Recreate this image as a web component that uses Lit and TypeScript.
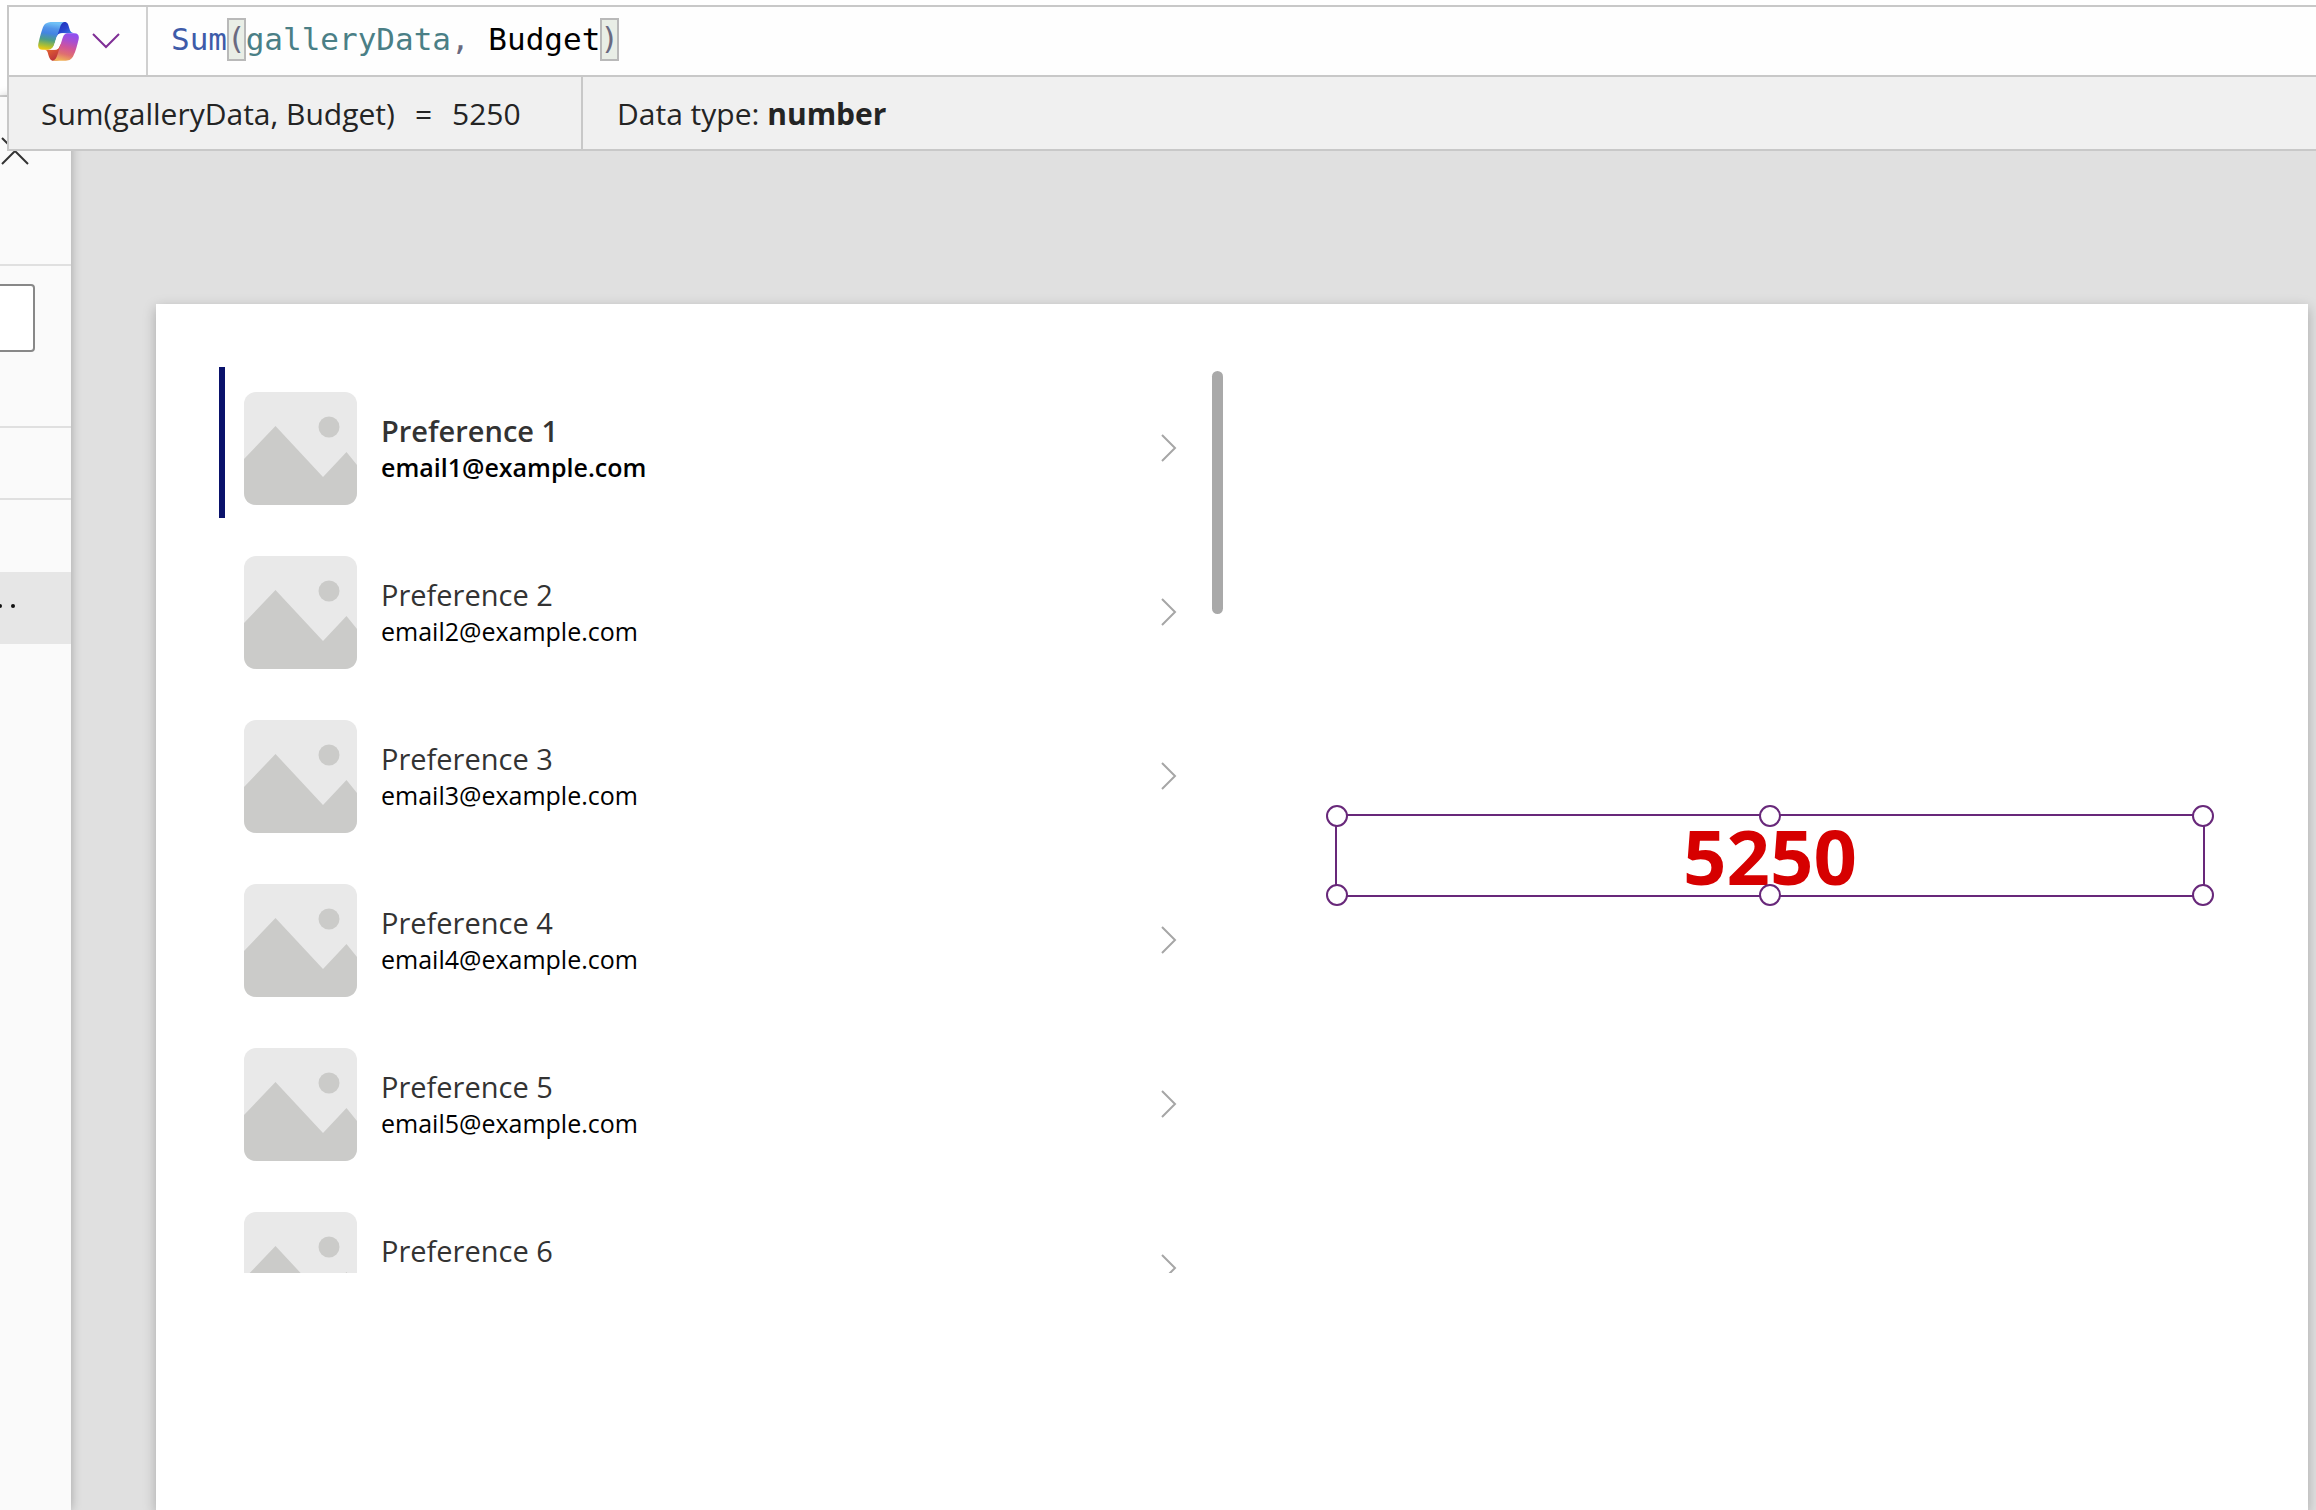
import { LitElement, html, css, svg } from "lit";
import { customElement, property, state } from "lit/decorators.js";
import { classMap } from "lit/directives/class-map.js";

interface Preference {
  title: string;
  email?: string;
}

@customElement("copilot-logo")
class CopilotLogo extends LitElement {
  static styles = css`
    :host { display: block; }
    svg { display: block; width: 41px; height: 39px; }
  `;

  render() {
    return html`<svg viewBox="0 0 124 118" aria-hidden="true">
      <defs>
        <linearGradient id="fold" x1="0" y1="0" x2="1" y2="1">
          <stop offset="0" stop-color="#1d2bb4" />
          <stop offset="0.5" stop-color="#2746cf" />
          <stop offset="1" stop-color="#4aa3f5" />
        </linearGradient>
        <linearGradient id="left" x1="0.3" y1="0" x2="0.15" y2="1">
          <stop offset="0" stop-color="#6fc0f6" />
          <stop offset="0.2" stop-color="#5294e8" />
          <stop offset="0.38" stop-color="#4384e2" />
          <stop offset="0.62" stop-color="#4d9f86" />
          <stop offset="0.82" stop-color="#a3bd3a" />
          <stop offset="1" stop-color="#fbcb0c" />
        </linearGradient>
        <linearGradient id="base" x1="0" y1="0" x2="0.6" y2="1">
          <stop offset="0" stop-color="#f08a3c" />
          <stop offset="0.5" stop-color="#dc5a33" />
          <stop offset="1" stop-color="#b92f3c" />
        </linearGradient>
        <linearGradient id="right" x1="0.6" y1="0" x2="0.35" y2="1">
          <stop offset="0" stop-color="#8f4ff0" />
          <stop offset="0.25" stop-color="#a94fd0" />
          <stop offset="0.5" stop-color="#d0559a" />
          <stop offset="0.75" stop-color="#df6f70" />
          <stop offset="1" stop-color="#f0b357" />
        </linearGradient>
      </defs>
      <path fill="url(#fold)" d="M64 0H80C90 0 92 8 95 20C97 30 102 34 110 34H78C66 34 62 36 58 46L52 40Z" />
      <path fill="url(#base)" d="M16 84H50C58 84 62 80 64 74L74 60L62 116L46 117C38 117 34 108 31 98C29 88 26 84 16 84Z" />
      <path fill="url(#left)" d="M44 0H82C73 0 69 8 66 18L50 66C46 78 42 84 30 84H14C2 84-1 76 1 66C6 44 10 30 15 16C20 4 28 0 44 0Z" />
      <path fill="#fefefe" d="M86 34C78 34 76 40 73 50L64 76C62 82 58 84 50 84H33C43 83 47 76 50 66L56 46C59 38 62 34 72 34Z" />
      <path fill="url(#right)" d="M92 34H110C122 34 125 42 123 52C118 72 114 88 108 100C103 112 96 117 84 117H44C52 116 56 108 59 98L74 50C78 38 82 34 92 34Z" />
    </svg>`;
  }
}

@customElement("formula-bar")
class FormulaBar extends LitElement {
  static styles = css`
    :host { display: block; padding: 5px 0 0 7px; color: #242424; }
    .frame { border: 2px solid #c8c8c8; border-right: 0; background: #fefefe; }
    .entry { display: flex; height: 68px; border-bottom: 2px solid #c8c8c8; }
    .copilot {
      display: flex; align-items: center; gap: 13px;
      width: 139px; padding: 0 0 0 29px;
      border: 0; border-right: 2px solid #d0d0d0; background: none;
      box-sizing: border-box;
    }
    .caret { display: block; width: 28px; height: 16px; fill: none; stroke: #7f2f96; stroke-width: 2; }
    .formula {
      flex: 1; display: flex; align-items: center; padding: 0 0 4px 23px;
      font: 31px "DejaVu Sans Mono", monospace; white-space: pre; outline: none;
    }
    .fn { color: #3e5ba9; }
    .name { color: #4a7f86; }
    .punct { color: #6a6a80; }
    .field { color: #000; }
    .bracket {
      color: #6a6a80; background: #e9eee6; outline: 2px solid #b9b9b9; outline-offset: -2px;
      height: 43px; line-height: 41px;
    }
    .result { display: flex; height: 72px; background: #f0f0f0; font: 30px "Open Sans", sans-serif; }
    .cell { display: flex; align-items: center; white-space: pre; }
    .value { width: 574px; padding-left: 32px; gap: 20px; box-sizing: border-box; border-right: 2px solid #c8c8c8; }
    .type { padding-left: 34px; }
    strong { font-weight: 700; }
  `;

  render() {
    return html`<div class="frame">
      <div class="entry">
        <button class="copilot" aria-label="Copilot">
          <copilot-logo></copilot-logo>
          <svg class="caret" viewBox="0 0 28 16" aria-hidden="true"><path d="M1 1L14 14L27 1" /></svg>
        </button>
        <div class="formula" role="textbox" aria-label="Formula" contenteditable="true" spellcheck="false"><span class="fn">Sum</span><span class="bracket">(</span><span class="name">galleryData</span><span class="punct">, </span><span class="field">Budget</span><span class="bracket">)</span></div>
      </div>
      <div class="result">
        <div class="cell value"><span>Sum(galleryData, Budget)</span><span>=</span><span>5250</span></div>
        <div class="cell type"><span>Data type: <strong>number</strong></span></div>
      </div>
    </div>`;
  }
}

@customElement("tree-pane")
class TreePane extends LitElement {
  static styles = css`
    :host {
      display: block; width: 71px; flex: none; overflow: hidden;
      background: #fafafa; position: relative;
    }
    .head { height: 167px; padding: 40px 0 0 1px; box-sizing: border-box; }
    .close { display: block; padding: 0; border: 0; background: none; }
    .close svg { display: block; width: 28px; height: 28px; stroke: #333; stroke-width: 2; fill: none; }
    .find { border: solid #e0e0e0; border-width: 2px 0; padding: 18px 0 74px; }
    .search {
      display: block; width: 47px; height: 68px; margin-left: -12px; padding: 0 8px;
      box-sizing: border-box; border: 2px solid #888; border-radius: 4px; background: #fff;
    }
    .item { height: 70px; border-bottom: 2px solid #e0e0e0; }
    .item.plain { height: 72px; border: 0; }
    .item.active { height: 72px; border: 0; background: #e6e6e6; display: flex; align-items: center; }
    .more { display: block; padding: 0; border: 0; background: none; }
    .more svg { display: block; width: 20px; height: 6px; margin-top: -4px; fill: #111; }
  `;

  render() {
    return html`
      <div class="head">
        <button class="close" aria-label="Close">
          <svg viewBox="0 0 28 28" aria-hidden="true"><path d="M1 1L27 27M27 1L1 27" /></svg>
        </button>
      </div>
      <div class="find"><input class="search" type="search" aria-label="Search" /></div>
      <div class="item"></div>
      <div class="item plain"></div>
      <div class="item active">
        <button class="more" aria-label="More actions">
          <svg viewBox="0 0 20 6" aria-hidden="true"><circle cx="0" cy="3" r="2" /><circle cx="13" cy="3" r="2" /></svg>
        </button>
      </div>`;
  }
}

@customElement("preference-gallery")
class PreferenceGallery extends LitElement {
  @property({ attribute: false }) items: Preference[] = [];
  @state() private selected = 0;

  static styles = css`
    :host { display: flex; justify-content: space-between; height: 906px; overflow: hidden; }
    .list { flex: 1; margin: 0; padding: 0 35px 0 0; list-style: none; }
    .row {
      display: flex; align-items: center; height: 151px; margin-bottom: 13px;
      padding: 11px 0 0 19px; box-sizing: border-box; border-left: 6px solid transparent;
    }
    .row.selected { border-left-color: #0a126b; }
    .thumb { display: block; width: 113px; height: 113px; flex: none; }
    .text { flex: 1; margin-left: 24px; font-family: "Open Sans", sans-serif; }
    .title { font-size: 29px; line-height: 37px; color: #333; }
    .email { font-size: 25px; line-height: 36px; min-height: 36px; color: #000; }
    .selected .title, .selected .email { font-weight: 600; }
    .next { display: block; padding: 0; border: 0; background: none; }
    .next svg { display: block; width: 16px; height: 28px; fill: none; stroke: #a6a6a6; stroke-width: 2; }
    .thumb-bar { width: 11px; height: 243px; margin-top: 4px; border-radius: 6px; background: #a9a9a9; }
  `;

  private picture() {
    return svg`
      <rect width="113" height="113" rx="12" fill="#e9e9e9" />
      <circle cx="85" cy="35" r="10.5" fill="#cbcbc9" />
      <path fill="#cbcbc9" d="M0 67L31.500 34L79 85L102.500 60L113 73V101C113 108 108 113 101 113H12C5 113 0 108 0 101Z" />`;
  }

  render() {
    return html`
      <ul class="list">
        ${this.items.map(
          (item, i) => html`<li class=${classMap({ row: true, selected: i === this.selected })}>
            <svg class="thumb" viewBox="0 0 113 113" aria-hidden="true">${this.picture()}</svg>
            <div class="text">
              <div class="title">${item.title}</div>
              <div class="email">${item.email}</div>
            </div>
            <button class="next" aria-label="Open ${item.title}" @click=${() => (this.selected = i)}>
              <svg viewBox="0 0 16 28" aria-hidden="true"><path d="M1 1L14 14L1 27" /></svg>
            </button>
          </li>`
        )}
      </ul>
      <div class="thumb-bar"></div>`;
  }
}

@customElement("selected-label")
class SelectedLabel extends LitElement {
  static styles = css`
    :host { display: block; }
    .box {
      position: relative; display: flex; align-items: center; justify-content: center;
      height: 83px; box-sizing: border-box; border: 2px solid #68287a;
      font: 700 76px/80px "Open Sans", sans-serif; color: #d60000;
    }
    .handle {
      position: absolute; width: 22px; height: 22px; box-sizing: border-box;
      border: 2px solid #68287a; border-radius: 50%; background: #fff;
    }
    .top { top: -11px; }
    .bottom { bottom: -11px; }
    .left { left: -11px; }
    .center { left: calc(50% - 11px); }
    .right { right: -11px; }
  `;

  render() {
    return html`<div class="box">
      <span>5250</span>
      ${["top", "bottom"].map((v) => ["left", "center", "right"].map((h) => html`<i class="handle ${v} ${h}"></i>`))}
    </div>`;
  }
}

@customElement("app-root")
class AppRoot extends LitElement {
  private items: Preference[] = [
    { title: "Preference 1", email: "email1@example.com" },
    { title: "Preference 2", email: "email2@example.com" },
    { title: "Preference 3", email: "email3@example.com" },
    { title: "Preference 4", email: "email4@example.com" },
    { title: "Preference 5", email: "email5@example.com" },
    { title: "Preference 6" },
  ];

  static styles = css`
    :host { display: flex; flex-direction: column; height: 100vh; overflow: hidden; background: #fff; }
    formula-bar { flex: none; position: relative; z-index: 1; }
    .body { flex: 1; min-height: 0; display: flex; margin-top: -56px; border-top: 2px solid #d8d8d8; }
    tree-pane { box-shadow: 0 0 10px rgba(0, 0, 0, 0.28); }
    .stage { flex: 1; display: flex; padding: 207px 8px 0 85px; background: #e0e0e0; }
    .screen {
      flex: 1; display: flex; align-items: flex-start; gap: 112px;
      padding: 63px 103px 0 63px; background: #fff; box-shadow: 0 4px 12px rgba(0, 0, 0, 0.25);
    }
    preference-gallery { flex: 1004 1 0; }
    selected-label { flex: 870 1 0; padding-top: 447px; }
  `;

  render() {
    return html`
      <formula-bar></formula-bar>
      <div class="body">
        <tree-pane></tree-pane>
        <main class="stage">
          <div class="screen">
            <preference-gallery .items=${this.items}></preference-gallery>
            <selected-label></selected-label>
          </div>
        </main>
      </div>`;
  }
}
